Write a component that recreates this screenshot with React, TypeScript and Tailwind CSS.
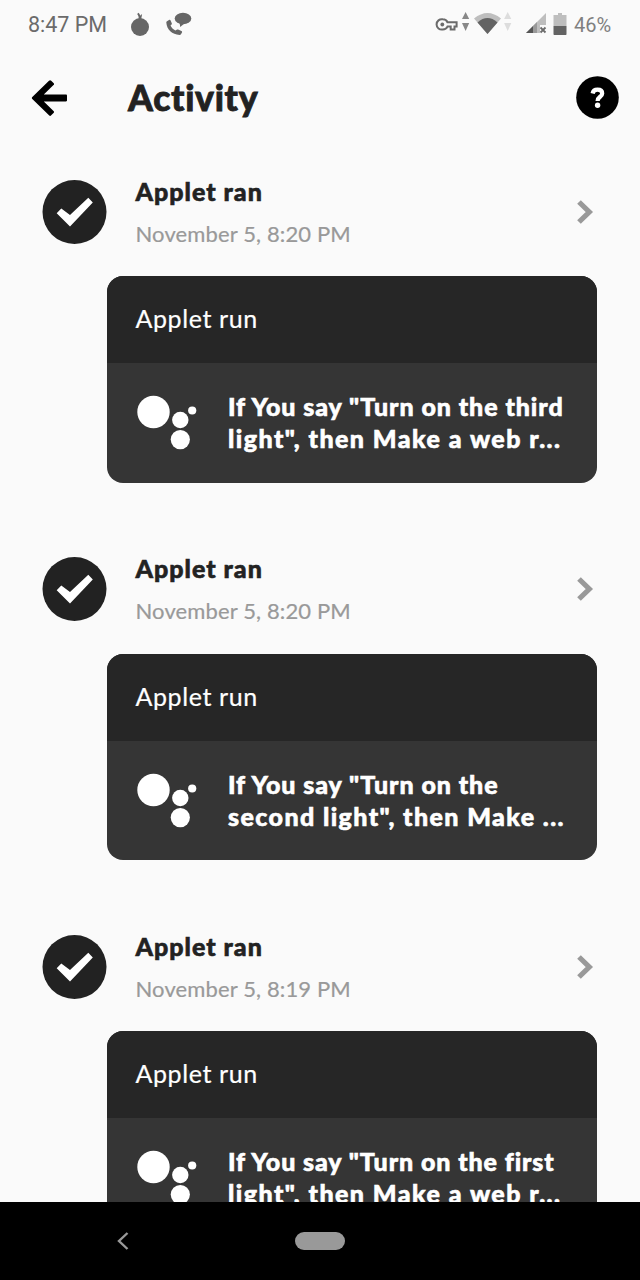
type Item = { time: string; lines: { text: string; className: string }[] };

const items: Item[] = [
  {
    time: 'November 5, 8:20 PM',
    lines: [
      { text: 'If You say "Turn on the third', className: 'tracking-[0.93px]' },
      { text: 'light", then Make a web r...', className: 'tracking-[1.45px]' },
    ],
  },
  {
    time: 'November 5, 8:20 PM',
    lines: [
      { text: 'If You say "Turn on the', className: 'tracking-[0.93px]' },
      { text: 'second light", then Make ...', className: 'tracking-[1.4px]' },
    ],
  },
  {
    time: 'November 5, 8:19 PM',
    lines: [
      { text: 'If You say "Turn on the first', className: 'tracking-[0.9px]' },
      { text: 'light", then Make a web r...', className: 'tracking-[1.45px]' },
    ],
  },
];

function StatusBar() {
  return (
    <div className="flex h-[50px] shrink-0 items-center font-['Roboto',sans-serif] text-[21.5px] text-[#6b6b6b]">
      <span className="mt-px ml-[28px] w-[100px] whitespace-nowrap">8:47 PM</span>
      <svg className="h-[50px] w-[70px]" viewBox="128 0 70 50" fill="#666">
        <circle cx="140" cy="27" r="9" />
        <path d="M138.600 19c.2-2-.2-3.500-1.400-5l1.300-1.200c1 1.200 1.500 2 1.700 3 .4-.8 1-1.300 1.900-1.500-.2 1.500-.7 2.700-.7 4.700z" />
        <ellipse cx="183" cy="18.500" rx="8.300" ry="5.800" />
        <path d="M179.500 22l.7 5 4.800-4z" />
        <path d="M167 21.300l2-1.300c.7-.4 1.300-.2 1.600.5l1.200 2.700c.2.600.1 1.100-.4 1.500l-.9.800c1 2.200 2.700 3.900 4.900 4.900l1.300-.7c.4-.3.900-.3 1.400-.1l3.300 1.300c.7.300.9.900.6 1.500l-.9 1.700c-.4.600-.8.800-1.500.8-7.500-.3-12.800-5.300-13.300-12.400 0-.5.200-.9.700-1.200z" />
      </svg>
      <svg className="ml-auto h-[50px] w-[144px]" viewBox="430 0 144 50">
        <path d="M447.500 22.300h9.100v4.300h-2.100v3h-3.800v-3h-3.200c-.9 1.900-2.600 2.900-4.700 2.900a5.200 5.200 0 1 1 0-10.200c2.200 0 4 1.200 4.700 3z" fill="none" stroke="#6b6b6b" strokeWidth="2" />
        <circle cx="442.300" cy="24.500" r="1.900" fill="#6b6b6b" />
        <path d="M465.600 12l3.600 7h-7.200zM462 23h7.200l-3.600 8z" fill="#888" />
        <path d="M474 18.500q13.500-11 27 0L487.500 34z" fill="#bebebe" />
        <path d="M477.500 22.400q10-8.800 20 0L487.500 34z" fill="#636363" />
        <path d="M507.700 12l3.600 7h-7.200zM504.100 23h7.200l-3.600 8z" fill="#ddd" />
        <path d="M546 13v12h-6v8h-14z" fill="#bebebe" />
        <path d="M533 26v7h-7z" fill="#555" />
        <path d="M533 26l4-4v11h-4z" fill="#999" />
        <path d="M540.500 27.500l5 5m0-5l-5 5" stroke="#6b6b6b" strokeWidth="1.800" />
        <path d="M553.500 15h4.500v-2h4v2h4.500v11h-13z" fill="#bebebe" />
        <path d="M553.500 26h13v8c0 .7-.3 1-1 1h-11c-.7 0-1-.3-1-1z" fill="#636363" />
      </svg>
      <span className="mr-[28px] w-[38px] whitespace-nowrap text-[20px] text-[#808080]">46%</span>
    </div>
  );
}

function Header() {
  return (
    <header className="flex h-[95px] shrink-0 items-center pr-[21px] pl-[31px]">
      <svg className="h-[38px] w-[38px]" viewBox="31 78.500 38 38">
        <path d="M32.300 96.500L49 80.300c.8-.8 1.500-.8 2.200 0l2.300 2.100c.8.800.8 1.500 0 2.200L43.800 94h22c.8 0 1.200.4 1.200 1.200v4.600c0 .8-.4 1.200-1.200 1.200h-22l9.700 9.500c.8.700.8 1.400 0 2.100l-2.300 2.200c-.7.800-1.400.8-2.200 0L32.300 98.600c-.6-.7-.6-1.400 0-2.100z" />
      </svg>
      <h1 className="ml-[59px] text-[35.500px] leading-[44px] font-black tracking-[0.7px] [-webkit-text-stroke:0.8px_#222]">Activity</h1>
      <svg className="ml-auto h-[43px] w-[43px]" viewBox="0 0 43 43">
        <circle cx="21.500" cy="21.500" r="21.300" />
        <path d="M16.600 17.500c.5-2.500 2.300-3.800 4.900-3.800 2.900 0 4.700 1.400 4.700 3.700 0 3.500-4.600 3.300-4.600 7.500" fill="none" stroke="#fff" strokeWidth="4.200" />
        <circle cx="21.600" cy="29.300" r="2.700" fill="#fff" />
      </svg>
    </header>
  );
}

function Activity({ item }: { item: Item }) {
  return (
    <article className="h-[377.5px] shrink-0 pr-[43px] pl-[42px]">
      <div className="flex h-[96.500px] items-start">
        <svg className="h-[64px] w-[65px] shrink-0" viewBox="0 0 65 64">
          <circle cx="32.500" cy="32" r="32" fill="#222" />
          <path d="M14.700 33.200L28 46.600 50.800 22.600 46.300 17.800 28 35 19.300 28.600z" fill="#fff" />
        </svg>
        <div className="ml-[28.500px] flex flex-col">
          <h2 className="-mt-[5px] h-[32px] text-[25px] leading-[32px] font-black tracking-[1px] whitespace-nowrap [-webkit-text-stroke:0.6px_#222]">Applet ran</h2>
          <p className="mt-[13px] text-[22px] leading-[28px] tracking-[0.130px] whitespace-nowrap text-[#999] [-webkit-text-stroke:0.200px_#999]">{item.time}</p>
        </div>
        <svg className="mt-[19px] mr-[3px] ml-auto h-[26px] w-[18px]" viewBox="0 0 18 26">
          <path d="M3 3L13.300 13 3 23" fill="none" stroke="#999" strokeWidth="5.200" />
        </svg>
      </div>
      <div className="ml-[65px] h-[206.500px] overflow-hidden rounded-[16px] bg-[#353535] text-white">
        <div className="flex h-[87px] items-center bg-[#262626] pl-[28.500px] text-[25px] tracking-[0.6px]">
          <span className="-mt-px [-webkit-text-stroke:0.200px_#fff]">Applet run</span>
        </div>
        <div className="flex">
          <svg className="mt-[32px] ml-[30px] h-[55px] w-[60px] shrink-0" viewBox="0 0 60 55" fill="#fff">
            <circle cx="16.500" cy="17" r="16.200" />
            <circle cx="43.300" cy="25" r="8.200" />
            <circle cx="55.200" cy="15.500" r="4.100" />
            <circle cx="43.300" cy="44.600" r="9.600" />
          </svg>
          <div className="mt-[27px] ml-[31px] text-[25px] leading-[32px] font-black whitespace-pre [-webkit-text-stroke:0.6px_#fff]">
            {item.lines.map((line) => (
              <div key={line.text} className={line.className}>{line.text}</div>
            ))}
          </div>
        </div>
      </div>
    </article>
  );
}

export default function App() {
  return (
    <div className="flex h-[1280px] w-[640px] flex-col overflow-hidden bg-[#fafafa] font-['Lato',sans-serif] text-[#222]">
      <StatusBar />
      <Header />
      <main className="flex min-h-0 flex-1 flex-col overflow-hidden pt-[34.500px]">
        {items.map((item, i) => (
          <Activity key={i} item={item} />
        ))}
      </main>
      <nav className="flex h-[78px] shrink-0 items-center bg-black pl-[116px]">
        <svg className="h-[20px] w-[14px]" viewBox="0 0 14 20">
          <path d="M11.500 2L3 10l8.500 8" fill="none" stroke="#999" strokeWidth="2.400" />
        </svg>
        <div className="ml-[165px] h-[18px] w-[50px] rounded-full bg-[#999]" />
      </nav>
    </div>
  );
}
